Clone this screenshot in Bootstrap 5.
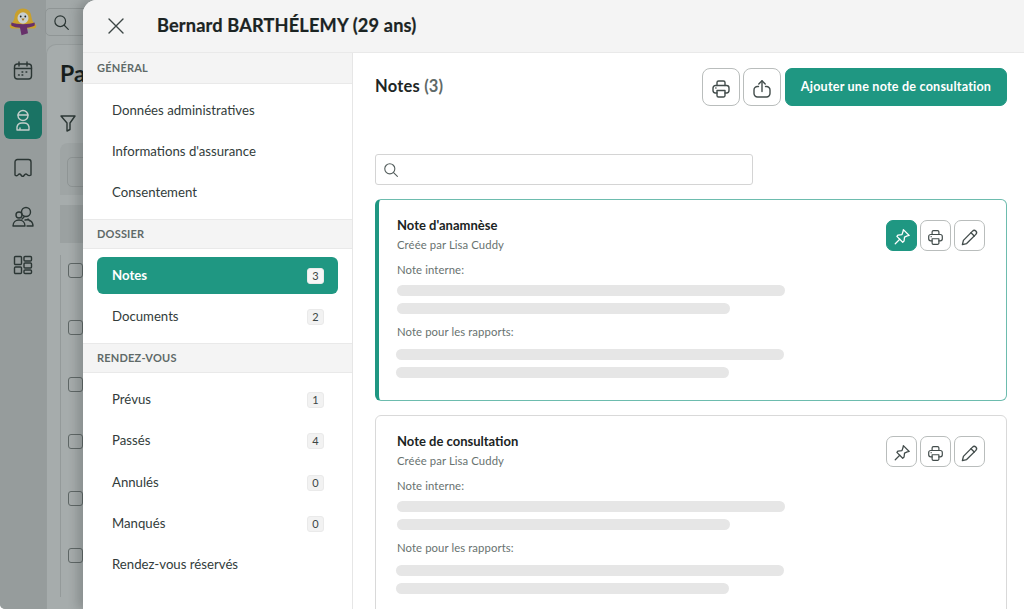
<!DOCTYPE html>
<html lang="fr">
<head>
  <meta charset="UTF-8" />
  <title>Bernard BARTHÉLEMY</title>
  <link href="https://cdn.jsdelivr.net/npm/bootstrap@5.3.2/dist/css/bootstrap.min.css" rel="stylesheet">
  <style>
    html, body { height: 100%; margin: 0; overflow: hidden; background: #fff; font-family: Lato, "Noto Sans", sans-serif; color: #23302e; }
    .app-shell { height: 609px; width: 1024px; position: relative; overflow: hidden; background: #a2a8a8; border-bottom-left-radius: 5px; }
    .rail { width: 46px; background: #969c9c; padding-top: 7px; }
    .rail-logo { height: 29px; margin-bottom: 16px; }
    .rail-item { width: 38px; height: 38px; margin: 0 0 10.5px 4px; border-radius: 6px; color: #2b3634; }
    .rail-item.is-active { background: #1a7364; color: #c4cecb; }
    .back-search { height: 28px; width: 60px; margin: 8px 0 8px -1px; border: 1px solid #8f9595; border-radius: 5px; padding: 0 7px; color: #2b3634; }
    .back-panel { border: 1px solid #979d9d; border-right: 0; border-radius: 10px 0 0 0; padding: 12px 14px 12px 13px; height: 570px; background: #a6acac; }
    .back-title { font-size: 23px; font-weight: 700; line-height: 32px; color: #161e1d; white-space: nowrap; }
    .back-filter { margin: 20px 0 0 0; height: 30px; color: #2b3634; }
    .back-tools { height: 52px; margin-top: 4px; padding: 14px 7px; background: #9fa5a5; border-radius: 8px 0 0 0; }
    .back-box { height: 30px; width: 40px; border: 1px solid #8f9595; border-radius: 5px; }
    .back-head { height: 38px; margin-top: 10px; margin-bottom: 12px; background: #9ba1a1; }
    .back-row { height: 57px; border-left: 1px solid #949a9a; padding: 8px 0 0 7px; }
    .back-check { width: 15px; height: 15px; border: 1.5px solid #5f6766; border-radius: 3px; display: block; }
    .drawer { position: absolute; left: 83px; top: 0; right: 0; bottom: 0; background: #fff; border-top-left-radius: 14px; box-shadow: -6px 0 10px rgba(40, 46, 46, .22); overflow: hidden; }
    .drawer-top { height: 53px; background: #f4f4f4; border-bottom: 1px solid #e9e9e9; padding-left: 24px; }
    .drawer-close { width: 18px; height: 18px; color: #3c4645; margin-right: 32px; }
    .drawer-name { font-size: 18.2px; font-weight: 700; letter-spacing: .15px; color: #1b2423; margin: 0; -webkit-text-stroke: .2px #1b2423; }
    .side-col { width: 270px; border-right: 1px solid #e6e6e6; }
    .side-head { height: 30px; background: #f4f4f4; border-bottom: 1px solid #e9e9e9; border-top: 1px solid #e9e9e9; padding-left: 14px; font-size: 11px; font-weight: 700; letter-spacing: .2px; color: #5f6a68; line-height: 28px; }
    .side-head.first { border-top: 0; height: 31px; line-height: 30px; }
    .side-group { padding: 8px 14px 3.5px; }
    .side-link { height: 37px; margin-bottom: 4.3px; padding: 0 14px 0 15px; border-radius: 6px; font-size: 13.2px; color: #323c3b; text-decoration: none; }
    .side-link.is-active { background: #1f9782; color: #fff; font-weight: 700; }
    .side-count { min-width: 17px; height: 16px; padding: 0 3px; border-radius: 3px; background: #f2f2f2; border: 1px solid #eaeaea; color: #3b4544; font-size: 11px; font-weight: 400; line-height: 14px; text-align: center; }
    .is-active .side-count { background: #f6f6f6; }
    .main-col { padding: 15px 17px 0 22px; min-width: 0; }
    .main-bar { height: 38px; margin-bottom: 48px; }
    .main-title { font-size: 16.5px; font-weight: 700; letter-spacing: .2px; margin: 0; color: #1d2625; }
    .main-title span { color: #5f6a68; }
    .tool-btn { width: 38px; height: 38px; padding: 0; border: 1px solid #b9bdbc; border-radius: 8px; background: #fff; color: #424c4b; }
    .add-btn { height: 38px; width: 222px; margin-left: 1px; padding: 0; background: #1f9782; border: 1px solid #1f9782; border-radius: 7px; color: #fff; font-size: 12.6px; font-weight: 700; letter-spacing: .2px; }
    .note-search { width: 378px; height: 31px; margin-bottom: 14px; border: 1px solid #d4d4d4; border-radius: 3px; padding-left: 7px; color: #555f5e; }
    .note-search input { border: 0; outline: 0; flex: 1; min-width: 0; background: transparent; }
    .note-card { border: 1px solid #d9d9d9; border-radius: 6px; margin-bottom: 14px; padding: 17px 21px 0 21px; height: 202px; }
    .note-card.is-pinned { border-color: #6dbcae; border-left: 4px solid #1f9782; padding-left: 18px; }
    .note-title { font-size: 13px; font-weight: 700; line-height: 16px; color: #1b2423; margin: 0; }
    .note-by { font-size: 11.3px; line-height: 16px; margin-top: 4px; color: #68726f; letter-spacing: .1px; }
    .note-label { font-size: 11.3px; line-height: 16px; margin-top: 9px; margin-bottom: 7px; color: #68726f; letter-spacing: .1px; }
    .note-label.second { margin-top: 3px; margin-bottom: 9px; }
    .skel { height: 11px; border-radius: 6px; background: #e6e6e6; margin-bottom: 7px; width: 388px; }
    .skel.short { width: 333px; }
    .skel-shift { margin-left: -1px; }
    .note-actions { margin-top: 3px; }
    .mini-btn { width: 31px; height: 31px; padding: 0; border: 1px solid #b9bdbc; border-radius: 7px; background: #fff; color: #424c4b; }
    .mini-btn.is-on { background: #1f9782; border-color: #1f9782; color: #fff; }
    .stroke-icon { fill: none; stroke: currentColor; stroke-width: 1.4; stroke-linecap: round; stroke-linejoin: round; }
  </style>
</head>
<body>
  <svg width="0" height="0" class="position-absolute">
    <symbol id="i-print" viewBox="0 0 20 20"><path d="M6 6.500V3.600A1.600 1.600 0 0 1 7.600 2h4.800A1.600 1.600 0 0 1 14 3.600v2.900"/><path d="M6 14H4.400A2.400 2.400 0 0 1 2 11.600V8.900a2.400 2.400 0 0 1 2.400-2.400h11.200A2.400 2.400 0 0 1 18 8.900v2.700a2.400 2.400 0 0 1-2.400 2.400H14"/><path d="M6 11.500h8v5a1.500 1.500 0 0 1-1.500 1.500h-5A1.500 1.500 0 0 1 6 16.500z"/><path d="M4.800 9h.2"/></symbol>
    <symbol id="i-share" viewBox="0 0 20 20"><path d="M6.500 7.500H5.500A3.500 3.500 0 0 0 2 11v3.500A3.500 3.500 0 0 0 5.500 18h9a3.500 3.500 0 0 0 3.500-3.500V11a3.500 3.500 0 0 0-3.500-3.500h-1"/><path d="M10 12.500V2"/><path d="M6.800 5 10 1.800 13.200 5"/></symbol>
    <symbol id="i-pin" viewBox="0 0 20 20"><path d="M11.500 1.800 18 8.300 15.800 8.800 12.800 10.200 12.300 14.500 10.800 15.800 4.300 9.300 5.600 7.800 10 7.300 11.100 4.200z"/><path d="M7.500 12.500 2.500 17.500"/></symbol>
    <symbol id="i-edit" viewBox="0 0 20 20"><path d="M13.200 3.300a2.400 2.400 0 0 1 3.500 3.400L7 16.400l-4.500 1.100L3.600 13z"/><path d="M11.600 5 15 8.400"/></symbol>
    <symbol id="i-search" viewBox="0 0 20 20"><circle cx="8.500" cy="8.500" r="6.300"/><path d="M13.200 13.200 18 18"/></symbol>
  </svg>

  <div class="app-shell d-flex">
    <div class="rail flex-shrink-0">
      <div class="rail-logo d-flex justify-content-center">
        <svg width="28" height="29" viewBox="0 0 28 29">
          <path d="M14 1.500c5.500 0 8 3.500 8.500 9 .3 3 2 5 4.500 7.500.8 1-.2 3.500-2 3.500H3c-1.800 0-2.800-2.500-2-3.500 2.500-2.500 4.200-4.500 4.500-7.500.5-5.500 3-9 8.500-9z" fill="#c9a02c"/>
          <ellipse cx="14" cy="11" rx="5.500" ry="5.800" fill="#c9cfcf"/>
          <circle cx="11.700" cy="9.500" r=".9" fill="#1e2524"/>
          <circle cx="16.300" cy="9.500" r=".9" fill="#1e2524"/>
          <path d="M12.300 11.500h3.400L14 14z" fill="#a8771f"/>
          <path d="M2.500 15.500c6 2.300 17 2.300 23 0 .4 1 .4 2.300 0 3.200-2.700 1-5 1.800-7.500 2.100l1 5.500-6.500 2-1.500-7.500c-3.200-.2-6-.8-8.500-2-.4-1-.4-2.300 0-3.300z" fill="#67306a"/>
        </svg>
      </div>
      <div class="rail-item d-flex align-items-center justify-content-center">
        <svg width="20" height="20" class="stroke-icon" viewBox="0 0 20 20"><rect x="1.500" y="3" width="17" height="15" rx="3"/><path d="M1.500 7.500h17M6 1v4M14 1v4M9 11h.8M13 11h.8M5.500 14h.8M9 14h.8"/></svg>
      </div>
      <div class="rail-item is-active d-flex align-items-center justify-content-center">
        <svg width="20" height="22" class="stroke-icon" viewBox="0 0 20 22"><circle cx="10" cy="6.500" r="5"/><path d="M5 6h10M4 21v-3a5 5 0 0 1 5-4h2a5 5 0 0 1 5 4v3zM7 21v-2"/></svg>
      </div>
      <div class="rail-item d-flex align-items-center justify-content-center">
        <svg width="20" height="20" class="stroke-icon" viewBox="0 0 20 20"><path d="M2 4a2.500 2.500 0 0 1 2.500-2.500h11A2.500 2.500 0 0 1 18 4v13c-2 1.500-3 .5-4-.5s-2-.5-3 1-2 1-3-.5-2.500-1-3 0S3 18 2 17z"/></svg>
      </div>
      <div class="rail-item d-flex align-items-center justify-content-center">
        <svg width="22" height="22" class="stroke-icon" viewBox="0 0 22 22"><circle cx="14" cy="6" r="4.500"/><circle cx="7" cy="9" r="3"/><path d="M1 20c0-4 3-6 6-6s6 2 6 6zM13 14c4-1 8 1 8 6h-6M10 13l2-2M16 13l2 2"/></svg>
      </div>
      <div class="rail-item d-flex align-items-center justify-content-center">
        <svg width="20" height="20" class="stroke-icon" viewBox="0 0 20 20"><rect x="1.500" y="1.500" width="7" height="8" rx="1"/><rect x="11" y="1.500" width="7.500" height="4.500" rx="1"/><rect x="11" y="8" width="7.500" height="5" rx="1"/><rect x="1.500" y="12" width="7" height="6.500" rx="1"/><rect x="11" y="15" width="7.500" height="3.500" rx="1"/></svg>
      </div>
    </div>
    <div class="flex-grow-1">
      <div class="back-search d-flex align-items-center">
        <svg width="17" height="17" class="stroke-icon"><use href="#i-search"/></svg>
      </div>
      <div class="back-panel">
        <div class="back-title">Pa</div>
        <div class="back-filter">
          <svg width="16" height="18" class="stroke-icon" viewBox="0 0 16 18"><path d="M1 2h14L10 9v6.500L7 17V9z"/></svg>
        </div>
        <div class="back-tools"><div class="back-box"></div></div>
        <div class="back-head"></div>
        <div class="back-row"><span class="back-check"></span></div>
        <div class="back-row"><span class="back-check"></span></div>
        <div class="back-row"><span class="back-check"></span></div>
        <div class="back-row"><span class="back-check"></span></div>
        <div class="back-row"><span class="back-check"></span></div>
        <div class="back-row"><span class="back-check"></span></div>
      </div>
    </div>

    <div class="drawer d-flex flex-column">
      <div class="drawer-top d-flex align-items-center flex-shrink-0">
        <svg class="drawer-close stroke-icon" viewBox="0 0 18 18"><path d="M2 2l14 14M16 2 2 16"/></svg>
        <h1 class="drawer-name">Bernard BARTHÉLEMY (29 ans)</h1>
      </div>
      <div class="d-flex flex-grow-1" style="min-height:0">
        <div class="side-col flex-shrink-0">
          <div class="side-head first">GÉNÉRAL</div>
          <div class="side-group">
            <a class="side-link d-flex align-items-center justify-content-between" href="#">Données administratives</a>
            <a class="side-link d-flex align-items-center justify-content-between" href="#">Informations d'assurance</a>
            <a class="side-link d-flex align-items-center justify-content-between" href="#">Consentement</a>
          </div>
          <div class="side-head">DOSSIER</div>
          <div class="side-group">
            <a class="side-link is-active d-flex align-items-center justify-content-between" href="#">Notes <span class="side-count">3</span></a>
            <a class="side-link d-flex align-items-center justify-content-between" href="#">Documents <span class="side-count">2</span></a>
          </div>
          <div class="side-head">RENDEZ-VOUS</div>
          <div class="side-group">
            <a class="side-link d-flex align-items-center justify-content-between" href="#">Prévus <span class="side-count">1</span></a>
            <a class="side-link d-flex align-items-center justify-content-between" href="#">Passés <span class="side-count">4</span></a>
            <a class="side-link d-flex align-items-center justify-content-between" href="#">Annulés <span class="side-count">0</span></a>
            <a class="side-link d-flex align-items-center justify-content-between" href="#">Manqués <span class="side-count">0</span></a>
            <a class="side-link d-flex align-items-center justify-content-between" href="#">Rendez-vous réservés</a>
          </div>
        </div>

        <div class="main-col flex-grow-1">
          <div class="main-bar d-flex align-items-center justify-content-between">
            <h2 class="main-title">Notes <span>(3)</span></h2>
            <div class="d-flex" style="gap:3px">
              <button class="btn tool-btn"><svg width="20" height="20" class="stroke-icon"><use href="#i-print"/></svg></button>
              <button class="btn tool-btn"><svg width="20" height="20" class="stroke-icon"><use href="#i-share"/></svg></button>
              <button class="btn add-btn">Ajouter une note de consultation</button>
            </div>
          </div>
          <div class="note-search d-flex align-items-center">
            <svg width="16" height="16" class="stroke-icon"><use href="#i-search"/></svg>
            <input type="text" aria-label="Rechercher">
          </div>

          <div class="card note-card is-pinned">
            <div class="d-flex justify-content-between">
              <div>
                <h3 class="note-title">Note d'anamnèse</h3>
                <div class="note-by">Créée par Lisa Cuddy</div>
              </div>
              <div class="note-actions d-flex" style="gap:3px">
                <button class="btn mini-btn is-on"><svg width="18" height="18" class="stroke-icon"><use href="#i-pin"/></svg></button>
                <button class="btn mini-btn"><svg width="17" height="17" class="stroke-icon"><use href="#i-print"/></svg></button>
                <button class="btn mini-btn"><svg width="19" height="19" class="stroke-icon"><use href="#i-edit"/></svg></button>
              </div>
            </div>
            <div class="note-label">Note interne:</div>
            <div class="skel"></div>
            <div class="skel short"></div>
            <div class="note-label second">Note pour les rapports:</div>
            <div class="skel skel-shift"></div>
            <div class="skel short skel-shift"></div>
          </div>

          <div class="card note-card">
            <div class="d-flex justify-content-between">
              <div>
                <h3 class="note-title">Note de consultation</h3>
                <div class="note-by">Créée par Lisa Cuddy</div>
              </div>
              <div class="note-actions d-flex" style="gap:3px">
                <button class="btn mini-btn"><svg width="18" height="18" class="stroke-icon"><use href="#i-pin"/></svg></button>
                <button class="btn mini-btn"><svg width="17" height="17" class="stroke-icon"><use href="#i-print"/></svg></button>
                <button class="btn mini-btn"><svg width="19" height="19" class="stroke-icon"><use href="#i-edit"/></svg></button>
              </div>
            </div>
            <div class="note-label">Note interne:</div>
            <div class="skel"></div>
            <div class="skel short"></div>
            <div class="note-label second">Note pour les rapports:</div>
            <div class="skel skel-shift"></div>
            <div class="skel short skel-shift"></div>
          </div>
        </div>
      </div>
    </div>
  </div>
  <script src="https://cdn.jsdelivr.net/npm/bootstrap@5.3.2/dist/js/bootstrap.bundle.min.js"></script>
</body>
</html>
